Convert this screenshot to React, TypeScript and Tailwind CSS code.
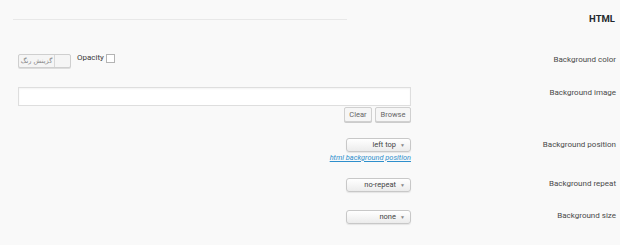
import React from "react";

function Select({ value }: { value: string }) {
  return (
    <div className="relative w-[65px] h-[14px] rounded-[3px] border border-[#c8c8c8] bg-gradient-to-b from-[#ffffff] to-[#ececec] shadow-[0_1px_1px_rgba(0,0,0,0.08)]">
      <span className="absolute right-[14px] top-0 leading-[12px] text-[7.5px] text-[#444]">{value}</span>
      <span className="absolute right-[5px] top-0 leading-[12px] text-[5px] text-[#888]">▼</span>
    </div>
  );
}

function Label({ children, pt = "pt-0" }: { children: React.ReactNode; pt?: string }) {
  return (
    <div className={`flex-1 text-right pr-[4px] text-[8px] leading-[12px] text-[#4a4a4a] ${pt}`}>{children}</div>
  );
}

export default function App() {
  return (
    <div className="w-[620px] h-[245px] bg-[#f9f9f9] overflow-hidden font-['Roboto',sans-serif]">
      <div className="h-[40px] flex items-start pl-[13px] pr-[5px] pt-[13px]">
        <div className="w-[334px] h-px bg-[#e8e8e8] mt-[6px]" />
        <div className="flex-1 text-right text-[9.5px] leading-[12px] font-bold text-[#23282d]">HTML</div>
      </div>

      {/* Row 1 */}
      <div className="flex mt-[14px]">
        <div className="w-[393px] ml-[18px] flex items-start">
          <div className="flex w-[53px] h-[14px] rounded-[2px] border border-[#cfcfcf] bg-[#f5f5f5] shadow-[0_1px_0_#ddd]">
            <div className="w-[36px] border-r border-[#d8d8d8] text-center text-[6.5px] leading-[12px] text-[#888] font-['DejaVu_Sans',sans-serif]" dir="rtl">
              گزینش رنگ
            </div>
            <div className="flex-1" />
          </div>
          <span className="ml-[6px] text-[8px] leading-[10px] mt-[-1px] text-[#3a3a3a]">Opacity</span>
          <span className="ml-[2px] w-[9px] h-[9px] border border-[#b4b4b4] bg-white" />
        </div>
        <Label>Background color</Label>
      </div>

      {/* Row 2 */}
      <div className="flex mt-[19px]">
        <div className="w-[393px] ml-[18px] flex flex-col">
          <div className="h-[19px] w-full border border-[#dedede] bg-white shadow-[inset_0_1px_2px_rgba(0,0,0,0.05)]" />
          <div className="flex justify-end gap-[3px] mt-[1px]">
            <div className="w-[28px] h-[15px] rounded-[2px] border border-[#d0d0d0] bg-[#f6f6f6] shadow-[0_1px_0_#ccc] text-center text-[7.5px] leading-[13px] text-[#666]">Clear</div>
            <div className="w-[36px] h-[15px] rounded-[2px] border border-[#d0d0d0] bg-[#f6f6f6] shadow-[0_1px_0_#ccc] text-center text-[7.5px] leading-[13px] text-[#666]">Browse</div>
          </div>
        </div>
        <Label>Background image</Label>
      </div>

      {/* Row 3 */}
      <div className="flex mt-[16px]">
        <div className="w-[393px] ml-[18px] flex flex-col items-end">
          <Select value="left top" />
          <span className="mt-[1px] text-[7.4px] leading-[9px] italic underline text-[#2e8fcc]">html background position</span>
        </div>
        <Label pt="pt-[1px]">Background position</Label>
      </div>

      {/* Row 4 */}
      <div className="flex mt-[16px]">
        <div className="w-[393px] ml-[18px] flex flex-col items-end">
          <Select value="no-repeat" />
        </div>
        <Label>Background repeat</Label>
      </div>

      {/* Row 5 */}
      <div className="flex mt-[18px]">
        <div className="w-[393px] ml-[18px] flex flex-col items-end">
          <Select value="none" />
        </div>
        <Label>Background size</Label>
      </div>
    </div>
  );
}
